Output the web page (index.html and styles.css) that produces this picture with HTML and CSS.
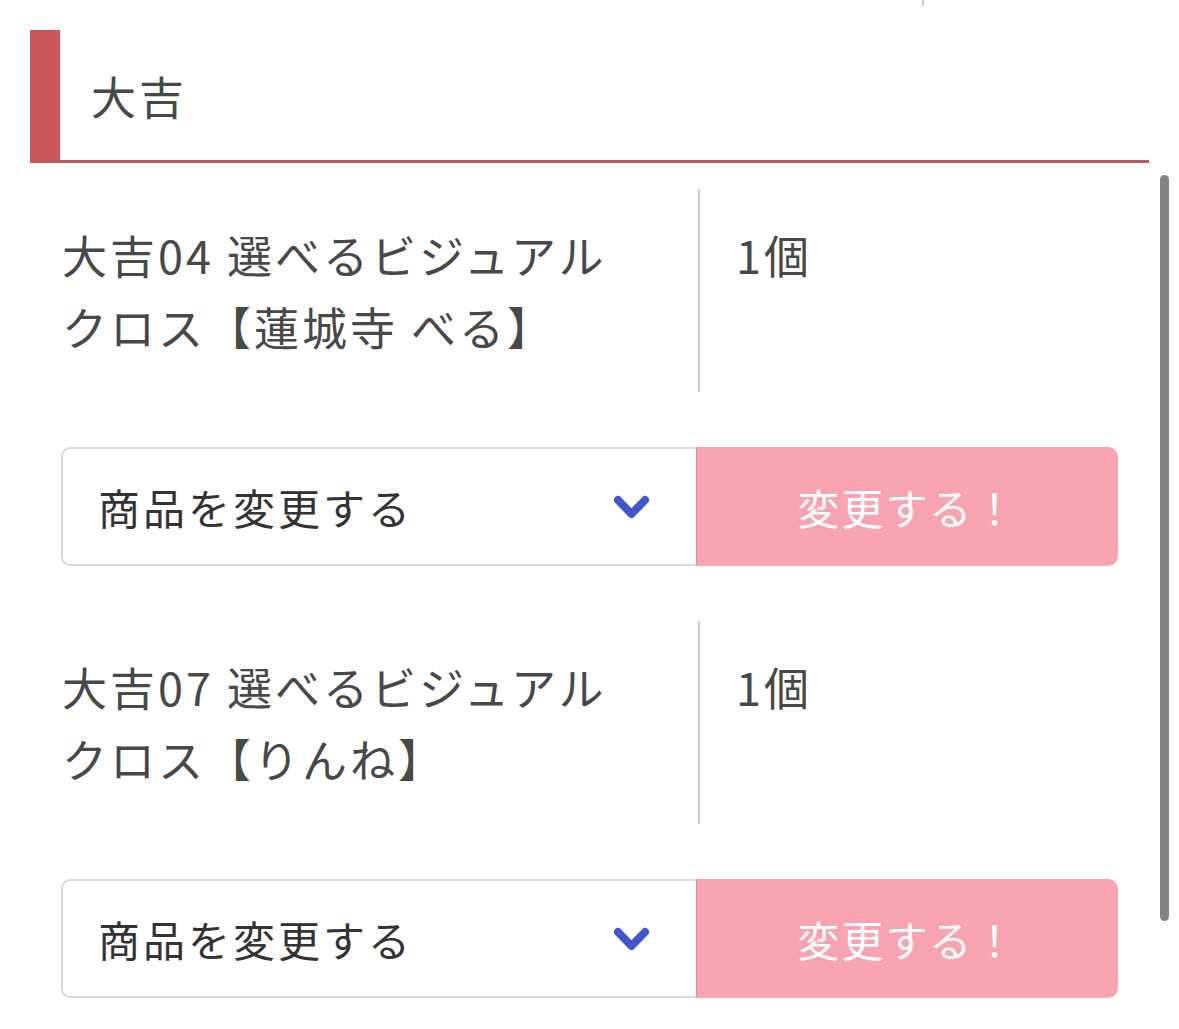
FILE: index.html
```html
<!DOCTYPE html>
<html lang="ja">
<head>
<meta charset="utf-8">
<title>大吉</title>
<link rel="stylesheet" href="styles.css">
</head>
<body>
<div class="page">
  <div class="top-tick"></div>
  <section class="section">
    <h2 class="section-title">大吉</h2>
    <div class="items">
      <div class="item">
        <div class="item-row">
          <div class="item-name">大吉04 選べるビジュアルクロス【蓮城寺 べる】</div>
          <div class="item-qty">1個</div>
        </div>
        <div class="change">
          <div class="select">
            <span class="select-text">商品を変更する</span>
            <svg class="chevron" width="37" height="26" viewBox="0 0 37 26"><path d="M5 5 L18.5 19 L32 5" fill="none" stroke="#4257c6" stroke-width="8" stroke-linecap="round" stroke-linejoin="round"/></svg>
          </div>
          <button class="change-btn">変更する！</button>
        </div>
      </div>
      <div class="item">
        <div class="item-row">
          <div class="item-name">大吉07 選べるビジュアルクロス【りんね】</div>
          <div class="item-qty">1個</div>
        </div>
        <div class="change">
          <div class="select">
            <span class="select-text">商品を変更する</span>
            <svg class="chevron" width="37" height="26" viewBox="0 0 37 26"><path d="M5 5 L18.5 19 L32 5" fill="none" stroke="#4257c6" stroke-width="8" stroke-linecap="round" stroke-linejoin="round"/></svg>
          </div>
          <button class="change-btn">変更する！</button>
        </div>
      </div>
    </div>
  </section>
  <div class="scrollbar"></div>
</div>
</body>
</html>
```

FILE: styles.css
```css
html, body {
  margin: 0;
  padding: 0;
  background: #ffffff;
}
body {
  font-family: "Noto Sans CJK JP", "Noto Sans", sans-serif;
  color: #484848;
  overflow: hidden;
}
.page {
  position: relative;
  width: 1179px;
  height: 1029px;
  overflow: hidden;
}
.top-tick {
  width: 2px;
  height: 6px;
  margin-left: 922px;
  background: #c8c8c8;
}
.section {
  margin: 24px 30px 0 30px;
  width: 1119px;
}
.section-title {
  margin: 0;
  height: 130px;
  border-left: 30px solid #c85656;
  border-bottom: 3px solid #c05a5a;
  padding-left: 31px;
  display: flex;
  align-items: center;
  font-size: 45px;
  font-weight: 400;
  color: #484848;
  line-height: 1;
  letter-spacing: 3px;
}
.items {
  padding: 26px 31px 0 31px;
  display: flex;
  flex-direction: column;
  gap: 55px;
}
.item {
  display: flex;
  flex-direction: column;
  gap: 55px;
}
.item-row {
  display: flex;
}
.item-name {
  width: 639px;
  box-sizing: border-box;
  padding: 30px 70px 29px 1px;
  font-size: 45px;
  line-height: 72px;
  border-right: 2px solid #d0d0d0;
  letter-spacing: 3px;
}
.item-qty {
  padding: 30px 0 0 36px;
  font-size: 45px;
  line-height: 72px;
  letter-spacing: 3px;
}
.change {
  display: flex;
  height: 119px;
}
.select {
  width: 635px;
  box-sizing: border-box;
  border: 2px solid #dadada;
  border-right: none;
  border-radius: 9px 0 0 9px;
  display: flex;
  align-items: center;
  justify-content: space-between;
  padding: 0 46px 0 35px;
}
.select-text {
  font-size: 42px;
  color: #333333;
  letter-spacing: 3px;
}
.chevron {
  display: block;
  margin-top: 2px;
}
.change-btn {
  width: 422px;
  border: none;
  border-left: 1px solid #e08d9d;
  border-radius: 0 10px 10px 0;
  background: #f7a3b2;
  color: #ffffff;
  font-family: "Noto Sans CJK JP", "Noto Sans", sans-serif;
  font-size: 42px;
  letter-spacing: 2px;
  padding: 0;
}
.scrollbar {
  position: absolute;
  left: 1160px;
  top: 175px;
  width: 9px;
  height: 746px;
  border-radius: 5px;
  background: #838383;
}
```
